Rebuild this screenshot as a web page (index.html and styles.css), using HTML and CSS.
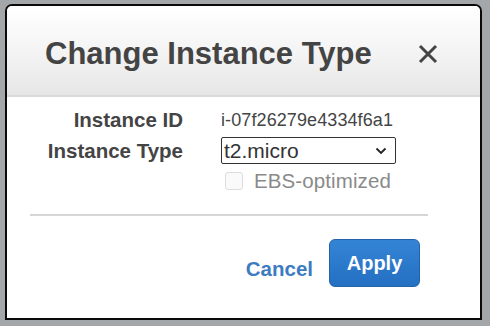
FILE: index.html
```html
<!DOCTYPE html>
<html lang="en">
<head>
    <meta charset="UTF-8">
    <title>Change Instance Type</title>
    <link rel="stylesheet" href="styles.css">
</head>
<body>
    <div class="dialog">
        <div class="header">
            <h2 class="title">Change Instance Type</h2>
            <button class="close" type="button" aria-label="Close">
                <svg width="20" height="20" viewBox="0 0 20 20">
                    <path d="M2 2 L18 18 M18 2 L2 18" stroke="#444" stroke-width="3" stroke-linecap="butt"/>
                </svg>
            </button>
        </div>
        <div class="form">
            <div class="label">Instance ID</div>
            <div class="value">i-07f26279e4334f6a1</div>
            <div class="label">Instance Type</div>
            <div class="value">
                <div class="select-wrap">
                    <select class="select">
                        <option>t2.micro</option>
                    </select>
                    <svg class="chevron" width="12" height="8" viewBox="0 0 12 8">
                        <path d="M1.5 1.5 L6 6 L10.5 1.5" fill="none" stroke="#222" stroke-width="1.8"/>
                    </svg>
                </div>
            </div>
            <div class="label"></div>
            <div class="value">
                <label class="check">
                    <span class="box"></span>
                    <span>EBS-optimized</span>
                </label>
            </div>
        </div>
        <div class="divider"></div>
        <div class="footer">
            <a class="cancel" href="#">Cancel</a>
            <button class="apply" type="button">Apply</button>
        </div>
    </div>
</body>
</html>
```

FILE: styles.css
```css
body {
    margin: 0;
    background-color: #a4a7aa;
    font-family: "Liberation Sans", Arial, sans-serif;
    height: 326px;
    overflow: hidden;
}
.dialog {
    margin: 4px 8px 0 5px;
    width: 473px;
    height: 312px;
    border: 2px solid #0a0a0a;
    border-radius: 7px 7px 0 0;
    background-color: #fff;
}
.header {
    height: 89px;
    border-radius: 5px 5px 0 0;
    background: linear-gradient(#ffffff, #f3f3f3 55%, #e6e6e6);
    border-bottom: 2px solid #dadada;
    display: flex;
    align-items: center;
    padding: 0 42px 0 38px;
    justify-content: space-between;
}
.title {
    margin: 6px 0 0 0;
    font-size: 31px;
    font-weight: bold;
    color: #444;
}
.close {
    border: none;
    background: none;
    padding: 0;
    margin-top: 6px;
    width: 20px;
    height: 20px;
    display: flex;
}
.form {
    display: grid;
    grid-template-columns: 176px 1fr;
    column-gap: 38px;
    row-gap: 5px;
    padding-top: 11px;
    align-items: center;
}
.label {
    text-align: right;
    font-weight: bold;
    font-size: 20.5px;
    color: #444;
}
.value {
    font-size: 18px;
    letter-spacing: 0.1px;
    color: #444;
}
.select-wrap {
    position: relative;
    width: 175px;
}
.select {
    appearance: none;
    -webkit-appearance: none;
    width: 175px;
    height: 27px;
    border: 1px solid #333;
    border-radius: 2px;
    background: #fff;
    font-family: "Liberation Sans", Arial, sans-serif;
    font-size: 21px;
    color: #333;
    padding: 0 0 0 2px;
}
.chevron {
    position: absolute;
    right: 9px;
    top: 10px;
}
.check {
    display: flex;
    align-items: center;
    gap: 11px;
    font-size: 20.5px;
    color: #8a8a8a;
    padding-left: 4px;
}
.box {
    width: 16px;
    height: 16px;
    border: 1px solid #dcdcdc;
    border-radius: 3px;
    background: #fafafa;
}
.divider {
    margin: 21px 0 0 23px;
    width: 398px;
    height: 2px;
    background-color: #d6d6d6;
}
.footer {
    display: flex;
    justify-content: flex-end;
    align-items: flex-end;
    gap: 16px;
    padding: 23px 60px 0 0;
}
.cancel {
    font-size: 20.5px;
    font-weight: bold;
    color: #3d7cc1;
    text-decoration: none;
    margin-bottom: 6px;
}
.apply {
    width: 91px;
    height: 48px;
    border: 1px solid #2563a8;
    border-radius: 6px;
    background: linear-gradient(#3484d6, #2470c2);
    color: #fff;
    font-family: "Liberation Sans", Arial, sans-serif;
    font-size: 20px;
    font-weight: bold;
    padding: 0;
}
```
